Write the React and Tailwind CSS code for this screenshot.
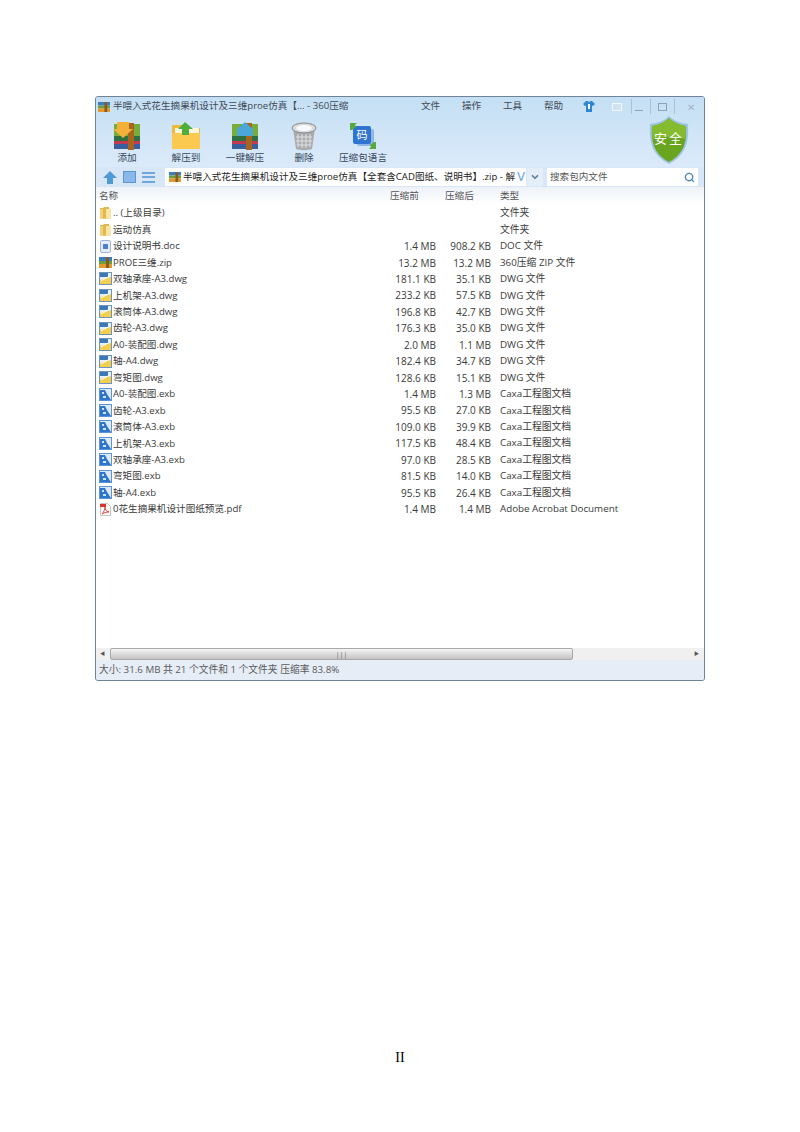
import { Search, ChevronDown } from 'lucide-react'

const FONT = "font-['Open_Sans','Noto_Sans_CJK_SC',sans-serif]"

const FILES = [
  { name: '.. (上级目录)', type: '文件夹', icon: 'folder' },
  { name: '运动仿真', type: '文件夹', icon: 'folder' },
  { name: '设计说明书.doc', before: '1.4 MB', after: '908.2 KB', type: 'DOC 文件', icon: 'doc' },
  { name: 'PROE三维.zip', before: '13.2 MB', after: '13.2 MB', type: '360压缩 ZIP 文件', icon: 'zip' },
  { name: '双轴承座-A3.dwg', before: '181.1 KB', after: '35.1 KB', type: 'DWG 文件', icon: 'dwg' },
  { name: '上机架-A3.dwg', before: '233.2 KB', after: '57.5 KB', type: 'DWG 文件', icon: 'dwg' },
  { name: '滚筒体-A3.dwg', before: '196.8 KB', after: '42.7 KB', type: 'DWG 文件', icon: 'dwg' },
  { name: '齿轮-A3.dwg', before: '176.3 KB', after: '35.0 KB', type: 'DWG 文件', icon: 'dwg' },
  { name: 'A0-装配图.dwg', before: '2.0 MB', after: '1.1 MB', type: 'DWG 文件', icon: 'dwg' },
  { name: '轴-A4.dwg', before: '182.4 KB', after: '34.7 KB', type: 'DWG 文件', icon: 'dwg' },
  { name: '弯矩图.dwg', before: '128.6 KB', after: '15.1 KB', type: 'DWG 文件', icon: 'dwg' },
  { name: 'A0-装配图.exb', before: '1.4 MB', after: '1.3 MB', type: 'Caxa工程图文档', icon: 'exb' },
  { name: '齿轮-A3.exb', before: '95.5 KB', after: '27.0 KB', type: 'Caxa工程图文档', icon: 'exb' },
  { name: '滚筒体-A3.exb', before: '109.0 KB', after: '39.9 KB', type: 'Caxa工程图文档', icon: 'exb' },
  { name: '上机架-A3.exb', before: '117.5 KB', after: '48.4 KB', type: 'Caxa工程图文档', icon: 'exb' },
  { name: '双轴承座-A3.exb', before: '97.0 KB', after: '28.5 KB', type: 'Caxa工程图文档', icon: 'exb' },
  { name: '弯矩图.exb', before: '81.5 KB', after: '14.0 KB', type: 'Caxa工程图文档', icon: 'exb' },
  { name: '轴-A4.exb', before: '95.5 KB', after: '26.4 KB', type: 'Caxa工程图文档', icon: 'exb' },
  { name: '0花生摘果机设计图纸预览.pdf', before: '1.4 MB', after: '1.4 MB', type: 'Adobe Acrobat Document', icon: 'pdf' },
]

function RarIcon({ size = 12 }) {
  return (
    <svg width={size} height={size} viewBox="0 0 13 13" className="shrink-0">
      <path d="M0 1h13v4H0z" fill="#3a7fc4" />
      <path d="M0 5h13v3H0z" fill="#6f9f3c" />
      <path d="M0 8h13v4H0z" fill="#e39a2c" />
      <path d="M7 1h3v11H7z" fill="#8a5a22" />
    </svg>
  )
}

function FileIcon({ type }) {
  if (type === 'folder') {
    return (
      <svg width="13" height="14" viewBox="0 0 13 14" className="shrink-0">
        <path d="M1 2h3l1-1h5v1.500L11 3v9.500H1z" fill="#dcb64f" />
        <path d="M1 3h3v9.500H1z" fill="#f1d27a" />
        <path d="M4 2.500 7 1v11.500H4z" fill="#e3b84a" />
        <path d="M7 3h5v9.500H7z" fill="#f8e6a8" />
      </svg>
    )
  }
  if (type === 'doc') {
    return (
      <svg width="13" height="13" viewBox="0 0 13 13" className="shrink-0">
        <rect x="1.500" y="0.500" width="10" height="12" rx="1.500" fill="#e6eefa" stroke="#9db4da" />
        <rect x="4" y="4" width="5" height="5" rx="0.500" fill="#4a7fd0" />
      </svg>
    )
  }
  if (type === 'zip') return <RarIcon size={13} />
  if (type === 'dwg') {
    return (
      <svg width="13" height="13" viewBox="0 0 13 13" className="shrink-0">
        <rect x="0.500" y="0.500" width="12" height="12" fill="#e8f0f8" stroke="#6d93bf" />
        <path d="M1 1h8v4H1z" fill="#3b78b5" />
        <path d="M1 8 12 5v7H1z" fill="#f2cf50" />
        <path d="M2 9 9 5" stroke="#fff" strokeWidth="1" />
      </svg>
    )
  }
  if (type === 'exb') {
    return (
      <svg width="13" height="13" viewBox="0 0 13 13" className="shrink-0">
        <rect x="0.500" y="0.500" width="12" height="12" fill="#dbe9f8" stroke="#5a94d4" />
        <path d="M1 2h5l2 4 4 6H1z" fill="#2f75ca" />
        <path d="M3 4h2v2H3zM4 8h3v2H4z" fill="#cfe3f8" />
      </svg>
    )
  }
  return (
    <svg width="13" height="13" viewBox="0 0 13 13" className="shrink-0">
      <path d="M1.500.5h7l3 3v9h-10z" fill="#fbfbfb" stroke="#c4c4c4" />
      <path d="M1 1h6v3H1z" fill="#d8362a" />
      <path d="M3 11c2-2 3-5 3-7 0 3 1 4 4 5-3 0-5 1-7 2z" fill="none" stroke="#d8362a" strokeWidth="0.900" />
    </svg>
  )
}

function ToolIcon({ kind }) {
  if (kind === 'add' || kind === 'one') {
    return (
      <svg width="32" height="30" viewBox="0 0 32 30">
        <path d="M3 3h26v14H3z" fill="#77ad38" />
        <path d="M3 15h26v5H3z" fill="#2e7040" />
        <path d="M3 20h26v3H3z" fill="#c43a52" />
        <path d="M3 23h26v5H3z" fill="#38609e" />
        <path d="M17 2h6v27h-6z" fill="#a9641f" />
        {kind === 'add' ? (
          <path d="M6 1h12v7h4L12 17 2 8h4z" fill="#f2b23a" />
        ) : (
          <path d="M16 1 24 8v7H8V8z" fill="#4aa7d8" />
        )}
      </svg>
    )
  }
  if (kind === 'extract') {
    return (
      <svg width="32" height="30" viewBox="0 0 32 30">
        <path d="M2 4h11l2 3h15v21H2z" fill="#f0b93e" />
        <path d="M5 7h24v6H5z" fill="#fdf6e0" />
        <path d="M2 12h28v16H2z" fill="#fbc94f" />
        <path d="M15 1 23 8h-4v6h-7V8H8z" fill="#4fae3a" />
      </svg>
    )
  }
  if (kind === 'del') {
    return (
      <svg width="30" height="30" viewBox="0 0 30 30">
        <path d="M4 7 7 28c3 1.500 13 1.500 16 0l3-21z" fill="#a9abad" />
        <path d="M9 13v13M13 13v14M17 13v14M21 13v13M7 16h16M7 20h16M8 24h14" stroke="#dfe0e1" strokeWidth="1" />
        <ellipse cx="15" cy="7" rx="12" ry="5" fill="#d8dcde" stroke="#85898a" />
        <ellipse cx="15" cy="7" rx="8" ry="3" fill="#f8f9fa" />
      </svg>
    )
  }
  return (
    <svg width="30" height="30" viewBox="0 0 30 30">
      <rect x="9" y="8" width="17" height="17" rx="2" fill="#8fb7e6" />
      <rect x="5" y="5" width="18" height="18" rx="2" fill="#2f74d0" />
      <text x="14" y="18" textAnchor="middle" fontSize="11" fill="#fff" fontFamily="Noto Sans CJK SC">码</text>
      <path d="M2 9V2h7L7 4l1 2-4 3z" fill="#58a83c" />
      <path d="M28 21v7h-7l2-2-1-2 4-3z" fill="#58a83c" />
    </svg>
  )
}

function Tool({ kind, label, className }) {
  return (
    <div className={`flex flex-col items-center w-[60px] ${className}`}>
      <div className="h-[31px] flex items-end justify-center"><ToolIcon kind={kind} /></div>
      <span className="text-[9.6px] leading-[13px] text-[#35475a]">{label}</span>
    </div>
  )
}

function Shield() {
  return (
    <div className="relative w-[44px] h-[50px]">
      <svg width="44" height="50" viewBox="0 0 44 50">
        <path d="M22 1C17 6 10 8 3 9c-1 18 2 31 19 40C39 40 42 27 41 9 34 8 27 6 22 1z" fill="#9ec5e5" />
        <path d="M22 3C17 8 11 10 5 11c-1 16 2 28 17 36 15-8 18-20 17-36-6-1-12-3-17-8z" fill="#6aa51f" />
        <path d="M22 3C17 8 11 10 5 11c0 5 0 9 1 13 10-3 22-3 32 0 1-4 1-8 1-13-6-1-12-3-17-8z" fill="#85bc2f" />
      </svg>
      <span className="absolute left-0 right-0 top-[14px] text-center text-[13px] leading-[18px] tracking-[2px] text-white">安全</span>
    </div>
  )
}

export default function App() {
  return (
    <div className={`relative min-h-[1132px] bg-white flex flex-col items-center pt-[96px] ${FONT}`}>
      <div className="w-[610px] h-[585px] flex flex-col border border-[#6f8296] rounded-[3px] bg-[#e6edf6] overflow-hidden">
        {/* Title + toolbar */}
        <div className="h-[70px] flex flex-col bg-gradient-to-b from-[#c4dff4] to-[#dbeafa]">
          <div className="h-[19px] flex items-center pl-[2px] pr-[9px] text-[#333]">
            <RarIcon />
            <span className="ml-[3px] text-[9.6px] text-[#3f4a55]">半喂入式花生摘果机设计及三维proe仿真【... - 360压缩</span>
            <div className="ml-auto flex items-center text-[9.6px] text-[#3f4a55]">
              <span className="w-[41px] text-center">文件</span>
              <span className="w-[41px] text-center">操作</span>
              <span className="w-[41px] text-center">工具</span>
              <span className="w-[41px] text-center">帮助</span>
              <svg width="12" height="11" viewBox="0 0 12 11" className="ml-[9px]">
                <path d="M3 0h2l1 1.500L7 0h2l3 3-2 2-1-.500V11H3V4.500L2 5 0 3z" fill="#2f86d2" />
                <path d="M5 3h2v5H5z" fill="#fff" />
              </svg>
              <div className="ml-[17px] w-[10px] h-[8px] border border-[#f2f7fc] bg-[#cfe1f2]" />
              <div className="ml-[9px] w-px h-[15px] self-start bg-[#a9c1d8]" />
              <div className="ml-[3px] w-[8px] h-[8px] border-b border-[#8da3b8]" />
              <div className="ml-[7px] w-px h-[15px] self-start bg-[#a9c1d8]" />
              <div className="ml-[7px] w-[9px] h-[8px] border border-[#8da3b8]" />
              <div className="ml-[7px] w-px h-[15px] self-start bg-[#a9c1d8]" />
              <div className="ml-[12px] text-[10px] leading-[10px] text-[#9fb2c4]">✕</div>
            </div>
          </div>
          <div className="flex-1 flex items-start pl-[1px] pt-[4px]">
            <Tool kind="add" label="添加" />
            <Tool kind="extract" label="解压到" className="ml-[-1px]" />
            <Tool kind="one" label="一键解压" className="ml-[-1px]" />
            <Tool kind="del" label="删除" className="ml-[-1px]" />
            <Tool kind="lang" label="压缩包语言" className="ml-[-1px]" />
          </div>
        </div>
        <div className="absolute left-[647px] top-[115px]"><Shield /></div>

        {/* Address bar */}
        <div className="h-[20px] flex items-center bg-[#d7e7f7]">
          <svg width="14" height="13" viewBox="0 0 14 13" className="ml-[7px]">
            <path d="M7 0 14 7h-4v6H4V7H0z" fill="#4f9ad6" />
          </svg>
          <div className="ml-[6px] w-[13px] h-[12px] bg-[#8ab8e8] border border-[#5b96d2]" />
          <div className="ml-[6px] w-[13px] h-[11px] flex flex-col justify-between">
            <div className="h-[2px] bg-[#6ea6dd]" />
            <div className="h-[2px] bg-[#6ea6dd]" />
            <div className="h-[2px] bg-[#6ea6dd]" />
          </div>
          <div className="ml-[10px] w-[361px] h-[18px] bg-white flex items-center pl-[4px] overflow-hidden">
            <RarIcon />
            <span className="ml-[2px] text-[9.6px] whitespace-nowrap text-[#222]">半喂入式花生摘果机设计及三维proe仿真【全套含CAD图纸、说明书】.zip - 解</span>
            <span className="ml-auto mr-[1px] text-[13px] font-semibold text-[#7fb0e4]">V</span>
          </div>
          <div className="ml-[1px] w-[16px] h-[18px] bg-[#e4eef8] flex items-center justify-center">
            <ChevronDown size={10} strokeWidth={4} className="text-[#5b7c9e]" />
          </div>
          <div className="ml-[4px] w-[151px] h-[18px] bg-white flex items-center pl-[3px] pr-[3px] text-[9.6px] text-[#555]">
            <span>搜索包内文件</span>
            <Search size={11} strokeWidth={3} className="ml-auto text-[#4b86b8]" />
          </div>
        </div>

        {/* List */}
        <div className="flex-1 bg-white flex flex-col overflow-hidden text-[10px] text-[#3a3a3a]">
          <div className="h-[18px] shrink-0 flex items-center bg-gradient-to-b from-[#eef3f9] to-white text-[9.6px] text-[#555]">
            <span className="w-[294px] pl-[3px]">名称</span>
            <span className="w-[55px]">压缩前</span>
            <span className="w-[55px]">压缩后</span>
            <span>类型</span>
          </div>
          <div>
            {FILES.map((f) => (
              <div key={f.name} className="h-[16.45px] flex items-center leading-none whitespace-nowrap">
                <div className="w-[294px] flex items-center gap-[1px] pl-[3px] text-[9.6px]">
                  <FileIcon type={f.icon} />
                  <span>{f.name}</span>
                </div>
                <span className="w-[46px] text-right">{f.before}</span>
                <span className="w-[55px] text-right">{f.after}</span>
                <span className="ml-[9px] text-[9.8px]">{f.type}</span>
              </div>
            ))}
          </div>
        </div>

        {/* Scrollbar */}
        <div className="h-[12px] shrink-0 flex items-center bg-[#f0f0f0] text-[#555]">
          <span className="w-[14px] pl-[4px] text-[5px]">◀</span>
          <div className="w-[463px] h-[12px] rounded-[2px] border border-[#a8a8a8] bg-gradient-to-b from-[#f4f4f4] to-[#c4c4c4] flex items-center justify-center text-[7px] leading-none text-[#666]">
            |||
          </div>
          <span className="ml-auto pr-[5px] text-[5px]">▶</span>
        </div>

        {/* Status */}
        <div className="h-[20px] shrink-0 flex items-center pl-[3px] text-[9.75px] text-[#5a5a5a] bg-[#e6edf6]">
          大小: 31.6 MB 共 21 个文件和 1 个文件夹 压缩率 83.8%
        </div>
      </div>

      <div className="mt-[369px] font-['Liberation_Serif',serif] text-[14px] leading-[16px] text-black">II</div>
    </div>
  )
}
